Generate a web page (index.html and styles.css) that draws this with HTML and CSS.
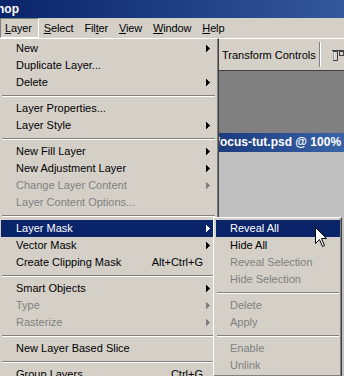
FILE: index.html
```html
<!DOCTYPE html>
<html lang="en">
<head>
    <meta charset="UTF-8">
    <title>Photoshop - Layer menu</title>
    <link rel="stylesheet" href="styles.css">
</head>
<body>

    <div class="app">
        <div class="titlebar"><span class="title">hop</span></div>

        <div class="menubar">
            <span class="mb-item open"><u>L</u>ayer</span>
            <span class="mb-item"><u>S</u>elect</span>
            <span class="mb-item">Fil<u>t</u>er</span>
            <span class="mb-item"><u>V</u>iew</span>
            <span class="mb-item"><u>W</u>indow</span>
            <span class="mb-item"><u>H</u>elp</span>
        </div>

        <!-- options bar -->
        <div class="optbar">
            <span class="opt-label">Transform Controls</span>
            <span class="opt-sep"></span>
            <svg class="align-icon" width="12" height="12" viewBox="0 0 12 12">
                <path d="M0 0.5H12" stroke="#404040"/>
                <rect x="1.5" y="1.5" width="4" height="9" fill="#d4d0c8" stroke="#404040"/>
                <path d="M2 2V10" stroke="#fff"/>
                <rect x="7.5" y="1.5" width="4" height="4" fill="#d4d0c8" stroke="#404040"/>
            </svg>
        </div>

        <div class="workspace">
            <div class="docwin">
                <div class="doc-title">focus-tut.psd @ 100%</div>
                <div class="doc-canvas"></div>
            </div>
        </div>

        <!-- Layer menu -->
        <div class="menu menu-layer">
            <div class="mi"><span class="mi-label">New</span><span class="mi-arr"><svg width="4" height="7"><path d="M0 0h1v7H0zM1 1h1v5H1zM2 2h1v3H2zM3 3h1v1H3z" fill="currentColor"/></svg></span></div>
            <div class="mi"><span class="mi-label">Duplicate Layer...</span><span class="mi-arr"></span></div>
            <div class="mi"><span class="mi-label">Delete</span><span class="mi-arr"><svg width="4" height="7"><path d="M0 0h1v7H0zM1 1h1v5H1zM2 2h1v3H2zM3 3h1v1H3z" fill="currentColor"/></svg></span></div>
            <div class="sep"></div>
            <div class="mi"><span class="mi-label">Layer Properties...</span><span class="mi-arr"></span></div>
            <div class="mi"><span class="mi-label">Layer Style</span><span class="mi-arr"><svg width="4" height="7"><path d="M0 0h1v7H0zM1 1h1v5H1zM2 2h1v3H2zM3 3h1v1H3z" fill="currentColor"/></svg></span></div>
            <div class="sep"></div>
            <div class="mi"><span class="mi-label">New Fill Layer</span><span class="mi-arr"><svg width="4" height="7"><path d="M0 0h1v7H0zM1 1h1v5H1zM2 2h1v3H2zM3 3h1v1H3z" fill="currentColor"/></svg></span></div>
            <div class="mi"><span class="mi-label">New Adjustment Layer</span><span class="mi-arr"><svg width="4" height="7"><path d="M0 0h1v7H0zM1 1h1v5H1zM2 2h1v3H2zM3 3h1v1H3z" fill="currentColor"/></svg></span></div>
            <div class="mi off"><span class="mi-label">Change Layer Content</span><span class="mi-arr"><svg width="4" height="7"><path d="M0 0h1v7H0zM1 1h1v5H1zM2 2h1v3H2zM3 3h1v1H3z" fill="currentColor"/></svg></span></div>
            <div class="mi off"><span class="mi-label">Layer Content Options...</span><span class="mi-arr"></span></div>
            <div class="sep"></div>
            <div class="mi hot"><span class="mi-label">Layer Mask</span><span class="mi-arr"><svg width="4" height="7"><path d="M0 0h1v7H0zM1 1h1v5H1zM2 2h1v3H2zM3 3h1v1H3z" fill="currentColor"/></svg></span></div>
            <div class="mi"><span class="mi-label">Vector Mask</span><span class="mi-arr"><svg width="4" height="7"><path d="M0 0h1v7H0zM1 1h1v5H1zM2 2h1v3H2zM3 3h1v1H3z" fill="currentColor"/></svg></span></div>
            <div class="mi"><span class="mi-label">Create Clipping Mask</span><span class="mi-key">Alt+Ctrl+G</span><span class="mi-arr"></span></div>
            <div class="sep"></div>
            <div class="mi"><span class="mi-label">Smart Objects</span><span class="mi-arr"><svg width="4" height="7"><path d="M0 0h1v7H0zM1 1h1v5H1zM2 2h1v3H2zM3 3h1v1H3z" fill="currentColor"/></svg></span></div>
            <div class="mi off"><span class="mi-label">Type</span><span class="mi-arr"><svg width="4" height="7"><path d="M0 0h1v7H0zM1 1h1v5H1zM2 2h1v3H2zM3 3h1v1H3z" fill="currentColor"/></svg></span></div>
            <div class="mi off"><span class="mi-label">Rasterize</span><span class="mi-arr"><svg width="4" height="7"><path d="M0 0h1v7H0zM1 1h1v5H1zM2 2h1v3H2zM3 3h1v1H3z" fill="currentColor"/></svg></span></div>
            <div class="sep"></div>
            <div class="mi"><span class="mi-label">New Layer Based Slice</span><span class="mi-arr"></span></div>
            <div class="sep"></div>
            <div class="mi"><span class="mi-label">Group Layers</span><span class="mi-key">Ctrl+G</span><span class="mi-arr"></span></div>
        </div>

        <!-- Layer Mask submenu -->
        <div class="menu menu-mask">
            <div class="mi hot"><span class="mi-label">Reveal All</span></div>
            <div class="mi"><span class="mi-label">Hide All</span></div>
            <div class="mi off"><span class="mi-label">Reveal Selection</span></div>
            <div class="mi off"><span class="mi-label">Hide Selection</span></div>
            <div class="sep"></div>
            <div class="mi off"><span class="mi-label">Delete</span></div>
            <div class="mi off"><span class="mi-label">Apply</span></div>
            <div class="sep"></div>
            <div class="mi off"><span class="mi-label">Enable</span></div>
            <div class="mi off"><span class="mi-label">Unlink</span></div>
        </div>

        <svg class="cursor" width="13" height="21" viewBox="0 0 13 21">
            <path d="M0.5 0.5V16.5L4.5 12.5L7.5 19.5L9.5 18.5L6.5 11.5H11.5Z" fill="#fff" stroke="#000"/>
        </svg>
    </div>

</body>
</html>
```

FILE: styles.css
```css
body {
    margin: 0;
    width: 344px;
    height: 376px;
    overflow: hidden;
    font-family: "Liberation Sans", Arial, sans-serif;
    font-size: 11px;
    color: #000;
    background: #808080;
}
.app {
    position: relative;
    height: 376px;
    display: flex;
    flex-direction: column;
}
.titlebar {
    height: 18px;
    line-height: 18px;
    background: linear-gradient(90deg, #0a246a, #34589a);
    color: #fff;
    font-size: 12px;
    font-weight: bold;
    white-space: nowrap;
}
.title {
    display: block;
    margin-left: -3px;
}
.menubar {
    height: 20px;
    background: #d4d0c8;
    display: flex;
    white-space: nowrap;
    letter-spacing: -0.15px;
}
.mb-item {
    padding: 0 5px 0 4px;
    border: 1px solid transparent;
    line-height: 18px;
}
.mb-item.open {
    padding-right: 6px;
    border-color: #808080 #fff #fff #808080;
}
.optbar {
    height: 31px;
    background: #d4d0c8;
    border-top: 1px solid #fff;
    border-bottom: 1px solid #404040;
    display: flex;
    align-items: center;
    padding-left: 222px;
    white-space: nowrap;
}
.opt-label {
    width: 97px;
}
.opt-sep {
    width: 0;
    height: 25px;
    border-left: 1px solid #808080;
    border-right: 1px solid #fff;
}
.align-icon {
    align-self: flex-start;
    margin: 11px 0 0 11px;
    flex-shrink: 0;
}
.workspace {
    flex: 1;
    padding-top: 62px;
    display: flex;
    flex-direction: column;
}
.docwin {
    flex: 1;
    margin-left: 150px;
    display: flex;
    flex-direction: column;
}
.doc-title {
    height: 19px;
    line-height: 19px;
    padding-left: 66px;
    background: linear-gradient(90deg, #0a246a, #3a64a6);
    color: #fff;
    font-size: 12px;
    font-weight: bold;
    white-space: nowrap;
}
.doc-canvas {
    flex: 1;
    background: #c0c0c0;
}

/* dropdown menus */
.menu {
    position: absolute;
    box-sizing: border-box;
    background: #d4d0c8;
    border: 1px solid;
    border-color: #fff #404040 #404040 #fff;
    box-shadow: inset -1px -1px #808080;
}
.menu-layer {
    left: -2px;
    top: 38px;
    width: 221px;
    padding: 1px 2px 0 2px;
}
.menu-mask {
    left: 213px;
    top: 217px;
    width: 129px;
    padding: 2px 1px 2px 2px;
}
.mi {
    height: 17px;
    line-height: 17px;
    display: flex;
    padding-left: 15px;
    white-space: nowrap;
}
.menu-mask .mi {
    padding-left: 14px;
}
.mi-label {
    flex: 1;
}
.mi-arr {
    width: 13px;
    display: flex;
    align-items: center;
}
.mi-arr svg {
    margin-left: 3px;
}
.mi.off {
    color: #808080;
}
.mi.hot {
    background: #0a246a;
    color: #fff;
}
.sep {
    margin: 4px 1px 3px;
    border-top: 1px solid #808080;
    border-bottom: 1px solid #fff;
}
.cursor {
    position: absolute;
    left: 315px;
    top: 227px;
}
```
